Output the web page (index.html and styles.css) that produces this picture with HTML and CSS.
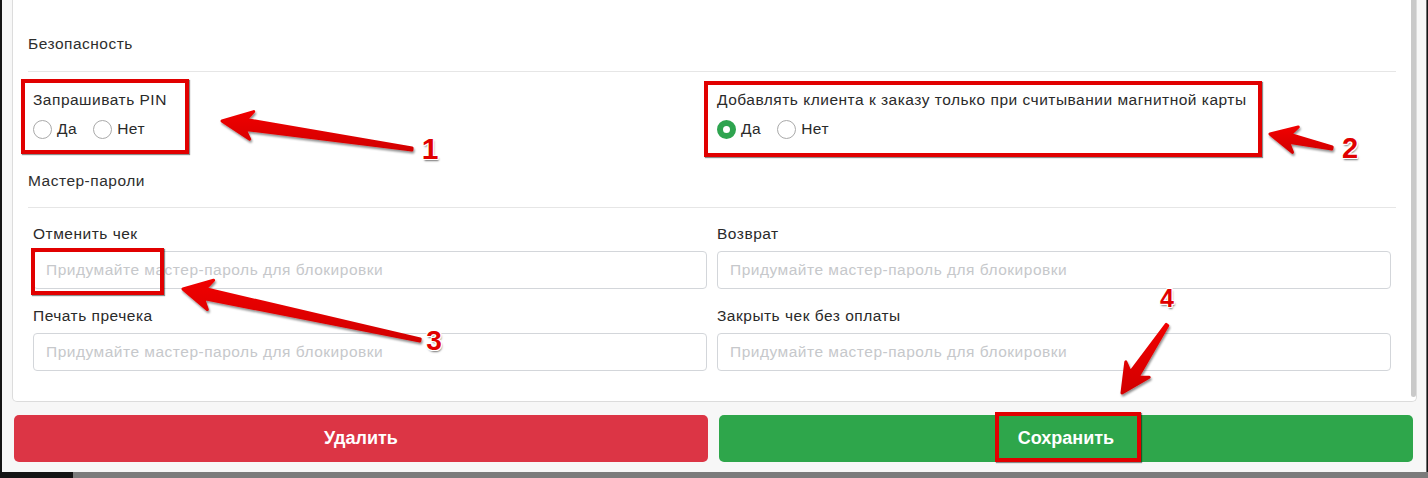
FILE: index.html
```html
<!DOCTYPE html>
<html lang="ru">
<head>
<meta charset="utf-8">
<title>Безопасность</title>
<link rel="stylesheet" href="styles.css">
</head>
<body>
<div class="screen">
  <div class="modal">
    <div class="card">
      <div class="card-body">
        <div class="section-title">Безопасность</div>
        <hr class="divider">
        <div class="cols">
          <div class="field">
            <div class="label">Запрашивать PIN</div>
            <div class="radios">
              <label class="radio"><input type="radio" name="pin"><span>Да</span></label>
              <label class="radio"><input type="radio" name="pin"><span>Нет</span></label>
            </div>
          </div>
          <div class="field">
            <div class="label">Добавлять клиента к заказу только при считывании магнитной карты</div>
            <div class="radios">
              <label class="radio"><input type="radio" name="card" checked><span>Да</span></label>
              <label class="radio"><input type="radio" name="card"><span>Нет</span></label>
            </div>
          </div>
        </div>
        <div class="section-title master">Мастер-пароли</div>
        <hr class="divider divider-tight">
        <div class="cols inputs">
          <div class="group">
            <label class="label">Отменить чек</label>
            <input class="control" type="password" placeholder="Придумайте мастер-пароль для блокировки">
          </div>
          <div class="group">
            <label class="label">Возврат</label>
            <input class="control" type="password" placeholder="Придумайте мастер-пароль для блокировки">
          </div>
          <div class="group">
            <label class="label">Печать пречека</label>
            <input class="control" type="password" placeholder="Придумайте мастер-пароль для блокировки">
          </div>
          <div class="group">
            <label class="label">Закрыть чек без оплаты</label>
            <input class="control" type="password" placeholder="Придумайте мастер-пароль для блокировки">
          </div>
        </div>
      </div>
      <div class="scrollbar"><div class="thumb"></div></div>
    </div>
    <div class="actions">
      <button class="btn btn-danger" type="button">Удалить</button>
      <button class="btn btn-success" type="button">Сохранить</button>
    </div>
  </div>
  <div class="strip"><div class="strip-dark"></div><div class="strip-gray"></div></div>

  <div class="mark mark-1"></div>
  <div class="mark mark-2"></div>
  <div class="mark mark-3"></div>
  <div class="mark mark-4"></div>

  <svg class="arrows" width="1428" height="478" viewBox="0 0 1428 478">
    <defs>
      <filter id="sh" x="-20%" y="-50%" width="140%" height="200%">
        <feDropShadow dx="1" dy="2" stdDeviation="1.3" flood-color="#000" flood-opacity="0.45"/>
      </filter>
      <linearGradient id="rg" x1="0" y1="0" x2="0" y2="1">
        <stop offset="0" stop-color="#f00000"/>
        <stop offset="1" stop-color="#d20000"/>
      </linearGradient>
    </defs>
    <g fill="url(#rg)" stroke="url(#rg)" stroke-width="3" stroke-linejoin="round" filter="url(#sh)">
      <polygon points="222,121 253.7,111.6 246.4,119.6 412.1,148 411.9,150 245,129.4 249.7,139.2"/>
      <polygon points="1270,134 1298.3,127 1290.4,134.5 1332.2,147 1331.8,149 1288.6,142.3 1292.5,152.4"/>
      <polygon points="183,289 213.6,280.2 205.6,288.7 420.2,339 419.8,341 203.5,298.5 207.3,309.6"/>
      <polygon points="1122,393 1149.2,377.3 1137.9,377.2 1167.8,325.6 1166.2,324.4 1130.3,372.2 1125.8,361.9"/>
    </g>
  </svg>

  <div class="num num-1">1</div>
  <div class="num num-2">2</div>
  <div class="num num-3">3</div>
  <div class="num num-4">4</div>
</div>
</body>
</html>
```

FILE: styles.css
```css
* { box-sizing: border-box; }

html, body {
  margin: 0;
  padding: 0;
  background: #151515;
}

body {
  font-family: "Liberation Sans", Arial, sans-serif;
  color: #2a2a2a;
}

.screen {
  position: relative;
  width: 1428px;
  height: 478px;
  overflow: hidden;
  background: #151515;
  display: flex;
  flex-direction: column;
}

.modal {
  margin-left: 2px;
  width: 1425px;
  height: 472px;
  background: #f7f7f7;
  border-right: 1px solid #6e6e6e;
  display: flex;
  flex-direction: column;
}

.card {
  margin: 0 9px 0 10px;
  height: 402px;
  background: #fff;
  border: 1px solid #dcdcdc;
  border-top: none;
  border-radius: 0 0 5px 5px;
  display: flex;
  overflow: hidden;
}

.card-body {
  flex: 1;
  padding: 33px 15px 0 15px;
  overflow: hidden;
}

.scrollbar {
  width: 5px;
  display: flex;
  flex-direction: column;
}

.thumb {
  height: 397px;
  background: #c9c9c9;
  border-radius: 0 0 3px 3px;
}

.section-title,
.label,
.radio,
.control {
  font-size: 15.5px;
  letter-spacing: 0.5px;
}

.section-title {
  line-height: 22px;
  color: #2e2e2e;
}

.section-title.master {
  margin-top: 30px;
}

.divider {
  margin: 16px 0 17px;
  border: 0;
  border-top: 1px solid #e6e6e6;
  height: 0;
}

.divider-tight {
  margin: 15px 0 15px;
}

.cols {
  display: grid;
  grid-template-columns: 1fr 1fr;
  column-gap: 10px;
  row-gap: 16px;
  padding: 0 5px;
}

.label {
  display: block;
  line-height: 22px;
  color: #2a2a2a;
}

.radios {
  margin-top: 7px;
  display: flex;
  align-items: center;
  height: 22px;
}

.radio {
  display: flex;
  align-items: center;
  margin-right: 16px;
  line-height: 22px;
  color: #2a2a2a;
}

.radio input {
  appearance: none;
  -webkit-appearance: none;
  margin: 0 5px 0 0;
  width: 19px;
  height: 19px;
  border: 1px solid #a9a9a9;
  border-radius: 50%;
  background: #fff;
}

.radio input:checked {
  border: 6px solid #2ea44f;
  background: #fff;
}

.group .label {
  margin-bottom: 6px;
}

.control {
  display: block;
  width: 100%;
  height: 38px;
  border: 1px solid #d3d6da;
  border-radius: 4px;
  padding: 0 12px;
  font-family: "Liberation Sans", Arial, sans-serif;
  color: #333;
  background: #fff;
  outline: none;
}

.control::placeholder {
  color: #c6c8cb;
}

.actions {
  display: grid;
  grid-template-columns: 1fr 1fr;
  column-gap: 11px;
  padding: 13px 13px 10px 12px;
}

.btn {
  height: 47px;
  border: 0;
  border-radius: 5px;
  color: #fff;
  font-family: "Liberation Sans", Arial, sans-serif;
  font-weight: bold;
  font-size: 18px;
}

.btn-danger { background: #dc3545; }
.btn-success { background: #2ea64b; }

.strip {
  flex: 1;
  display: flex;
}

.strip-dark {
  width: 73px;
  background: #141414;
}

.strip-gray {
  flex: 1;
  background: #7b7b7b;
}

/* annotations */
.mark {
  position: absolute;
  border: 4px solid #e10000;
  box-shadow: 1px 1px 1px rgba(0, 0, 0, 0.45);
}

.mark-1 { left: 21px; top: 79px; width: 168px; height: 75px; }
.mark-2 { left: 704px; top: 81px; width: 558px; height: 76px; }
.mark-3 { left: 31px; top: 248px; width: 133px; height: 47px; }
.mark-4 { left: 995px; top: 412px; width: 146px; height: 50px; }

.arrows {
  position: absolute;
  left: 0;
  top: 0;
  pointer-events: none;
}

.num {
  position: absolute;
  width: 30px;
  text-align: center;
  font-family: "Liberation Sans", Arial, sans-serif;
  font-weight: bold;
  line-height: 1;
  color: #e00000;
  text-shadow:
    1px 0 0 #fff, -1px 0 0 #fff, 0 1px 0 #fff, 0 -1px 0 #fff,
    1px 1px 0 #fff, -1px -1px 0 #fff, 1px -1px 0 #fff, -1px 1px 0 #fff,
    1px 2px 2px rgba(0, 0, 0, 0.55);
}

.num-1 { left: 415px; top: 134px; font-size: 30px; }
.num-2 { left: 1335px; top: 134px; font-size: 29px; }
.num-3 { left: 419px; top: 327px; font-size: 28px; }
.num-4 { left: 1152px; top: 286px; font-size: 25px; }
```
